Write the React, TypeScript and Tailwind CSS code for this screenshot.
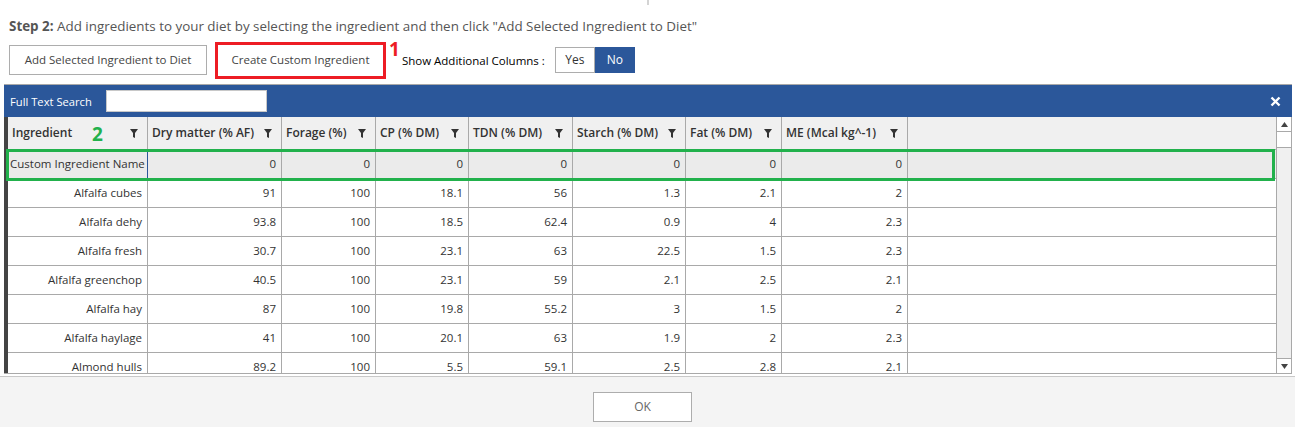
import React from "react";

const cols = [
  { label: "Ingredient", w: 140 },
  { label: "Dry matter (% AF)", w: 134 },
  { label: "Forage (%)", w: 94 },
  { label: "CP (% DM)", w: 93 },
  { label: "TDN (% DM)", w: 104 },
  { label: "Starch (% DM)", w: 113 },
  { label: "Fat (% DM)", w: 96 },
  { label: "ME (Mcal kg^-1)", w: 126 },
];

const rows: (string | number)[][] = [
  ["Alfalfa cubes", 91, 100, 18.1, 56, 1.3, 2.1, 2],
  ["Alfalfa dehy", 93.8, 100, 18.5, 62.4, 0.9, 4, 2.3],
  ["Alfalfa fresh", 30.7, 100, 23.1, 63, 22.5, 1.5, 2.3],
  ["Alfalfa greenchop", 40.5, 100, 23.1, 59, 2.1, 2.5, 2.1],
  ["Alfalfa hay", 87, 100, 19.8, 55.2, 3, 1.5, 2],
  ["Alfalfa haylage", 41, 100, 20.1, 63, 1.9, 2, 2.3],
  ["Almond hulls", 89.2, 100, 5.5, 59.1, 2.5, 2.8, 2.1],
];

const Funnel = () => (
  <svg width="8" height="9" viewBox="0 0 8 9" className="shrink-0">
    <path d="M0 0 H8 L5 4 V9 L3 8 V4 Z" fill="#333" />
  </svg>
);

export default function App() {
  const font = { fontFamily: '"Open Sans", "Noto Sans", sans-serif' };
  return (
    <div className="relative w-[1295px] h-[427px] bg-white overflow-hidden flex flex-col" style={font}>
      <div className="ml-[647px] w-[2px] h-[5px] bg-[#d4d4d4]" />
      <div className="ml-[9px] mt-[12px] text-[13.4px] leading-[18px] text-[#555] whitespace-nowrap">
        <span className="font-bold">Step 2:</span> Add ingredients to your diet by selecting the ingredient and then click "Add Selected Ingredient to Diet"
      </div>
      <div className="flex items-center mt-[5px] h-[40px]">
        <div className="ml-[9px] w-[198px] h-[30px] border border-[#adadad] flex items-center justify-center text-[11.5px] text-[#444]">
          Add Selected Ingredient to Diet
        </div>
        <div className="ml-[8px] w-[171px] h-[37px] border-[3px] border-[#ed1c24] flex items-center justify-center text-[11.5px] text-[#444]">
          Create Custom Ingredient
        </div>
        <div className="self-start ml-[3px] mt-[-2px] text-[19px] leading-[22px] font-bold text-[#ed1c24]">1</div>
        <div className="ml-[2px] mt-[1px] text-[11.5px] text-black whitespace-nowrap">Show Additional Columns :</div>
        <div className="ml-[10px] mt-[-1px] flex h-[26px]">
          <div className="w-[40px] border border-[#adadad] flex items-center justify-center text-[12px] text-[#333]">Yes</div>
          <div className="w-[40px] bg-[#2b579a] flex items-center justify-center text-[12px] text-white">No</div>
        </div>
      </div>
      <div className="mt-[4px] ml-[4px] w-[1288px] border-t border-[#a9a9a9] flex flex-col">
        <div className="h-[32px] bg-[#2b579a] flex items-center">
          <span className="ml-[6px] mt-[2px] text-[11.2px] text-white whitespace-nowrap">Full Text Search</span>
          <div className="ml-[14px] w-[161px] h-[22px] bg-white border border-[#c8c8c8]" />
          <div className="flex-1" />
          <svg width="11" height="11" viewBox="0 0 11 11" className="mr-[11px]">
            <path d="M1.5 1.5 L9.5 9.5 M9.5 1.5 L1.5 9.5" stroke="white" strokeWidth="2.4" />
          </svg>
        </div>
        <div className="relative flex h-[257px] border-r border-b border-[#a9a9a9]">
          <div className="w-[4px] bg-[#444] shrink-0" />
          <div className="flex-1 flex flex-col overflow-hidden">
            <div className="flex h-[33px] bg-[#f0f0f0] border-b border-[#a9a9a9] shrink-0">
              {cols.map((c) => (
                <div
                  key={c.label}
                  className="flex items-center justify-between pl-[4px] pr-[9px] border-r border-[#a9a9a9] text-[12px] font-semibold text-[#333] shrink-0"
                  style={{ width: c.w }}
                >
                  <span className="whitespace-nowrap">{c.label}</span>
                  <Funnel />
                </div>
              ))}
              <div className="flex-1" />
            </div>
            <div className="flex h-[29px] bg-[#ebebeb] border-b border-[#a9a9a9] shrink-0">
              <div className="w-[140px] shrink-0 flex items-center pl-[2px] border-r border-[#2b579a] text-[11.5px] text-[#333] whitespace-nowrap overflow-hidden">
                Custom Ingredient Name
              </div>
              {cols.slice(1).map((c) => (
                <div key={c.label} className="flex items-center justify-end pr-[5px] border-r border-[#a9a9a9] text-[11.5px] text-[#333] shrink-0" style={{ width: c.w }}>
                  0
                </div>
              ))}
              <div className="flex-1" />
            </div>
            {rows.map((r) => (
              <div key={r[0] as string} className="flex h-[29px] bg-white border-b border-[#a9a9a9] shrink-0">
                {cols.map((c, i) => (
                  <div key={c.label} className="flex items-center justify-end pr-[5px] border-r border-[#a9a9a9] text-[11.5px] text-[#333] shrink-0 whitespace-nowrap" style={{ width: c.w }}>
                    {r[i]}
                  </div>
                ))}
                <div className="flex-1" />
              </div>
            ))}
          </div>
          <div className="w-[15px] shrink-0 bg-[#f0f0f0] border-l border-[#a9a9a9] flex flex-col">
            <div className="h-[15px] bg-white border-b border-[#a9a9a9] flex items-center justify-center">
              <svg width="7" height="5" viewBox="0 0 7 5"><path d="M0 5 L3.5 0 L7 5 Z" fill="#444" /></svg>
            </div>
            <div className="h-[16px] bg-white border-b border-[#a9a9a9]" />
            <div className="flex-1" />
            <div className="h-[15px] bg-white border-t border-[#a9a9a9] flex items-center justify-center">
              <svg width="7" height="5" viewBox="0 0 7 5"><path d="M0 0 L7 0 L3.5 5 Z" fill="#444" /></svg>
            </div>
          </div>
          <div className="absolute left-[2px] top-[32px] w-[1269px] h-[32px] border-[3px] border-[#22b14c] pointer-events-none" />
          <div className="absolute left-[88px] top-[7px] text-[19px] leading-[20px] font-bold text-[#22b14c]">2</div>
        </div>
      </div>
      <div className="mt-[2px] flex-1 border-t border-[#c8c8c8] bg-[#f4f4f4] flex justify-center pr-[10px] pt-[15px]">
        <div className="w-[99px] h-[30px] bg-white border border-[#adadad] flex items-center justify-center text-[12px] text-[#666]">OK</div>
      </div>
    </div>
  );
}
